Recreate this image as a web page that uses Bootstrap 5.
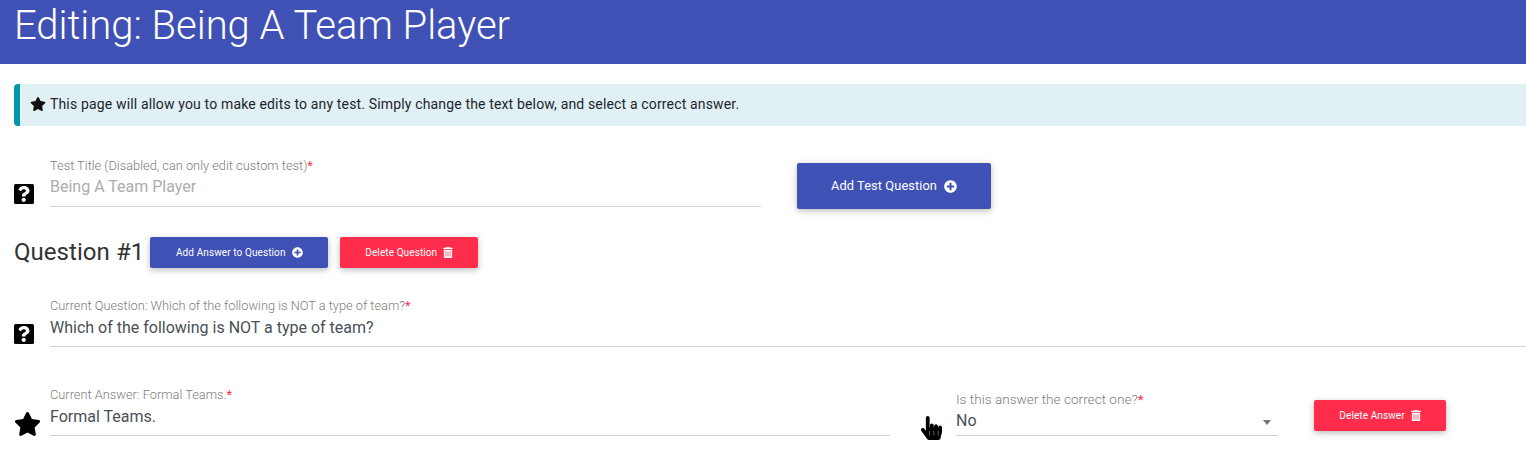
<!DOCTYPE html>
<html lang="en">
<head>
<meta charset="utf-8">
<title>Editing: Being A Team Player</title>
<link href="https://cdn.jsdelivr.net/npm/bootstrap@5.3.0/dist/css/bootstrap.min.css" rel="stylesheet">
<style>
html, body { overflow: hidden; }
body { font-family: Roboto, sans-serif; background: #fff; color: #212529; height: 457px; }
.page-head { background: #3f51b5; color: #fff; height: 64px; padding: 2px 15px 0 14px; }
.page-head h1 { font-size: 40px; font-weight: 300; line-height: 48px; margin: 0; letter-spacing: -.03px; }
.notice { background: #e1f0f5; border-left: 6px solid #0097a7; border-radius: 4px 0 0 4px; height: 42px; margin: 20px 0 0 14px; padding: 0 0 2px 10px; font-size: 14px; letter-spacing: .155px; color: #212529; }
.notice svg { width: 16px; height: 14px; margin-right: 4px; }
.sheet { padding-left: 14px; }
.fld { display: flex; align-items: flex-end; }
.ico { flex: 0 0 36px; height: 23px; }
.ico svg { display: block; }
.ico-star { height: 24px; }
.fld-body { flex: 1 1 auto; min-width: 0; }
.fld-label { display: block; font-size: 12.8px; font-weight: 300; line-height: 14px; color: #7d7d7d; margin: 0; }
.fld-label b { color: #ff2d4b; font-weight: 400; }
.fld-input { border: 0; border-bottom: 1px solid #ced4da; border-radius: 0; padding: 0 0 6px; height: 34px; font-size: 16px; color: #495057; background-color: transparent; box-shadow: none; }
.fld-input:not(:disabled) { padding-bottom: 4px; }
.fld-input:disabled { background: transparent; color: #adadad; }
.rowa { height: 50px; margin-top: 31px; }
.rowa .titlefld { width: 747px; }
.act { border: 0; border-radius: 2px; color: #fff; font-weight: 400; box-shadow: 0 2px 5px rgba(0,0,0,.16), 0 2px 10px rgba(0,0,0,.12); display: inline-flex; align-items: center; justify-content: center; letter-spacing: .1px; }
.act:hover, .act:active { color: #fff; }
.act-blue, .act-blue:hover { background: #3f51b5; }
.act-red, .act-red:hover { background: #ff2d4b; }
.add-big { margin-left: 36px; width: 194px; height: 46px; align-self: flex-start; margin-top: 6px; font-size: 12.8px; gap: 7px; }
.act-sm { font-size: 10px; height: 31px; gap: 6px; }
.q-head { margin-top: 30px; height: 31px; }
.q-head h2 { font-size: 24px; font-weight: 400; line-height: 31px; margin: 0 6px 0 0; color: #333; letter-spacing: .05px; }
.w1 { width: 178px; margin-right: 12px; }
.w2 { width: 138px; }
.qfld { margin-top: 31px; }
.anwrow { margin-top: 41px; }
.anw-left { width: 876px; flex: 0 0 876px; }
.anw-right { width: 358px; flex: 0 0 358px; margin-left: 31px; }
.anw-right .ico { flex-basis: 35px; height: 20px; }
.anw-right .ico svg { margin-bottom: -4px; }
.anw-right .fld-label { font-size: 13.6px; }
.anw-right select.fld-input { height: 30px; padding: 0; width: 322px; }
.pick { appearance: none; background-image: url("data:image/svg+xml,%3Csvg xmlns='http://www.w3.org/2000/svg' width='8' height='5'%3E%3Cpath d='M0 0h8L4 5z' fill='%23777'/%3E%3C/svg%3E"); background-repeat: no-repeat; background-position: right 7px top 14px; }
.del-ans { width: 132px; height: 31px; margin-left: 35px; align-self: flex-start; margin-top: 12px; font-size: 10px; gap: 6px; }
</style>
</head>
<body>
<header class="page-head"><h1>Editing: Being A Team Player</h1></header>

<div class="notice d-flex align-items-center">
  <svg viewBox="0 0 576 512" aria-hidden="true"><path fill="#111" d="M259.3 17.8L194 150.2 47.9 171.5c-26.2 3.8-36.7 36.1-17.7 54.6l105.7 103-25 145.5c-4.5 26.3 23.2 46 46.4 33.7L288 439.6l130.7 68.7c23.2 12.2 50.9-7.4 46.4-33.7l-25-145.5 105.7-103c19-18.5 8.5-50.8-17.7-54.6L382 150.2 316.7 17.8c-11.7-23.6-45.6-23.9-57.4 0z"/></svg>
  <span>This page will allow you to make edits to any test. Simply change the text below, and select a correct answer.</span>
</div>

<main class="sheet">
  <div class="d-flex rowa">
    <div class="fld titlefld">
      <div class="ico"><svg width="20" height="20" viewBox="0 0 512 512"><rect width="512" height="512" rx="40" fill="#000"/><path fill="#fff" transform="translate(256 256) scale(1.2) translate(-262 -260)" d="M262.655 90c-54.497 0-89.255 22.957-116.549 63.758-3.536 5.286-2.353 12.415 2.715 16.258l34.699 26.31c5.205 3.947 12.621 3.008 16.665-2.122 17.864-22.658 30.113-35.797 57.303-35.797 20.429 0 45.698 13.148 45.698 32.958 0 14.976-12.363 22.667-32.534 33.976C247.128 238.528 216 254.941 216 296v4c0 6.627 5.373 12 12 12h56c6.627 0 12-5.373 12-12v-1.333c0-28.462 83.186-29.647 83.186-106.667 0-58.002-60.165-102-116.531-102zM256 338c-25.365 0-46 20.635-46 46 0 25.364 20.635 46 46 46s46-20.636 46-46c0-25.365-20.635-46-46-46z"/></svg></div>
      <div class="fld-body">
        <label class="fld-label" for="t1">Test Title (Disabled, can only edit custom test)<b>*</b></label>
        <input id="t1" class="form-control fld-input" value="Being A Team Player" disabled>
      </div>
    </div>
    <button type="button" class="btn act act-blue add-big">Add Test Question
      <svg width="13" height="13" viewBox="0 0 512 512"><path fill="#fff" d="M256 8C119 8 8 119 8 256s111 248 248 248 248-111 248-248S393 8 256 8zm144 276c0 6.6-5.4 12-12 12h-92v92c0 6.6-5.4 12-12 12h-56c-6.6 0-12-5.4-12-12v-92h-92c-6.6 0-12-5.4-12-12v-56c0-6.6 5.4-12 12-12h92v-92c0-6.6 5.4-12 12-12h56c6.6 0 12 5.4 12 12v92h92c6.6 0 12 5.4 12 12v56z"/></svg>
    </button>
  </div>

  <div class="d-flex align-items-center q-head">
    <h2>Question #1</h2>
    <button type="button" class="btn act act-blue act-sm w1">Add Answer to Question
      <svg width="11" height="11" viewBox="0 0 512 512"><path fill="#fff" d="M256 8C119 8 8 119 8 256s111 248 248 248 248-111 248-248S393 8 256 8zm144 276c0 6.6-5.4 12-12 12h-92v92c0 6.6-5.4 12-12 12h-56c-6.6 0-12-5.4-12-12v-92h-92c-6.6 0-12-5.4-12-12v-56c0-6.6 5.4-12 12-12h92v-92c0-6.6 5.4-12 12-12h56c6.6 0 12 5.4 12 12v92h92c6.6 0 12 5.4 12 12v56z"/></svg>
    </button>
    <button type="button" class="btn act act-red act-sm w2">Delete Question
      <svg width="10" height="11" viewBox="0 0 448 512"><path fill="#fff" d="M32 464a48 48 0 0 0 48 48h288a48 48 0 0 0 48-48V128H32zm272-256a16 16 0 0 1 32 0v224a16 16 0 0 1-32 0zm-96 0a16 16 0 0 1 32 0v224a16 16 0 0 1-32 0zm-96 0a16 16 0 0 1 32 0v224a16 16 0 0 1-32 0zM432 32H312l-9.4-18.7A24 24 0 0 0 281.1 0H166.8a23.72 23.72 0 0 0-21.4 13.3L136 32H16A16 16 0 0 0 0 48v32a16 16 0 0 0 16 16h416a16 16 0 0 0 16-16V48a16 16 0 0 0-16-16z"/></svg>
    </button>
  </div>

  <div class="fld qfld">
    <div class="ico"><svg width="20" height="20" viewBox="0 0 512 512"><rect width="512" height="512" rx="40" fill="#000"/><path fill="#fff" transform="translate(256 256) scale(1.2) translate(-262 -260)" d="M262.655 90c-54.497 0-89.255 22.957-116.549 63.758-3.536 5.286-2.353 12.415 2.715 16.258l34.699 26.31c5.205 3.947 12.621 3.008 16.665-2.122 17.864-22.658 30.113-35.797 57.303-35.797 20.429 0 45.698 13.148 45.698 32.958 0 14.976-12.363 22.667-32.534 33.976C247.128 238.528 216 254.941 216 296v4c0 6.627 5.373 12 12 12h56c6.627 0 12-5.373 12-12v-1.333c0-28.462 83.186-29.647 83.186-106.667 0-58.002-60.165-102-116.531-102zM256 338c-25.365 0-46 20.635-46 46 0 25.364 20.635 46 46 46s46-20.636 46-46c0-25.365-20.635-46-46-46z"/></svg></div>
    <div class="fld-body">
      <label class="fld-label" for="q1">Current Question: Which of the following is NOT a type of team?<b>*</b></label>
      <input id="q1" class="form-control fld-input" value="Which of the following is NOT a type of team?">
    </div>
  </div>

  <div class="d-flex anwrow">
    <div class="fld anw-left">
      <div class="ico ico-star"><svg width="27" height="24" viewBox="0 0 576 512"><path fill="#000" d="M259.3 17.8L194 150.2 47.9 171.5c-26.2 3.8-36.7 36.1-17.7 54.6l105.7 103-25 145.5c-4.5 26.3 23.2 46 46.4 33.7L288 439.6l130.7 68.7c23.2 12.2 50.9-7.4 46.4-33.7l-25-145.5 105.7-103c19-18.5 8.5-50.8-17.7-54.6L382 150.2 316.7 17.8c-11.7-23.6-45.6-23.9-57.4 0z"/></svg></div>
      <div class="fld-body">
        <label class="fld-label" for="a1">Current Answer: Formal Teams.<b>*</b></label>
        <input id="a1" class="form-control fld-input" value="Formal Teams.">
      </div>
    </div>
    <div class="fld anw-right">
      <div class="ico"><svg width="21" height="24" viewBox="0 0 448 512"><path fill="#000" d="M448 240v96c0 3.084-.356 6.159-1.063 9.162l-32 136C410.686 499.23 394.562 512 376 512H168a40.004 40.004 0 0 1-32.35-16.473l-127.997-176c-12.993-17.866-9.043-42.883 8.822-55.876 17.867-12.994 42.884-9.043 55.877 8.823L104 315.992V40c0-22.091 17.908-40 40-40s40 17.909 40 40v200h8v-40c0-22.091 17.908-40 40-40s40 17.909 40 40v40h8v-24c0-22.091 17.908-40 40-40s40 17.909 40 40v24h8c0-22.091 17.908-40 40-40s40 17.909 40 40zm-256 80h-8v96h8v-96zm88 0h-8v96h8v-96zm88 0h-8v96h8v-96z"/></svg></div>
      <div class="fld-body">
        <label class="fld-label" for="s1">Is this answer the correct one?<b>*</b></label>
        <select id="s1" class="form-control fld-input pick"><option>No</option><option>Yes</option></select>
      </div>
    </div>
    <button type="button" class="btn act act-red del-ans">Delete Answer
      <svg width="10" height="11" viewBox="0 0 448 512"><path fill="#fff" d="M32 464a48 48 0 0 0 48 48h288a48 48 0 0 0 48-48V128H32zm272-256a16 16 0 0 1 32 0v224a16 16 0 0 1-32 0zm-96 0a16 16 0 0 1 32 0v224a16 16 0 0 1-32 0zm-96 0a16 16 0 0 1 32 0v224a16 16 0 0 1-32 0zM432 32H312l-9.4-18.7A24 24 0 0 0 281.1 0H166.8a23.72 23.72 0 0 0-21.4 13.3L136 32H16A16 16 0 0 0 0 48v32a16 16 0 0 0 16 16h416a16 16 0 0 0 16-16V48a16 16 0 0 0-16-16z"/></svg>
    </button>
  </div>
</main>
<script src="https://cdn.jsdelivr.net/npm/bootstrap@5.3.0/dist/js/bootstrap.bundle.min.js"></script>
</body>
</html>
